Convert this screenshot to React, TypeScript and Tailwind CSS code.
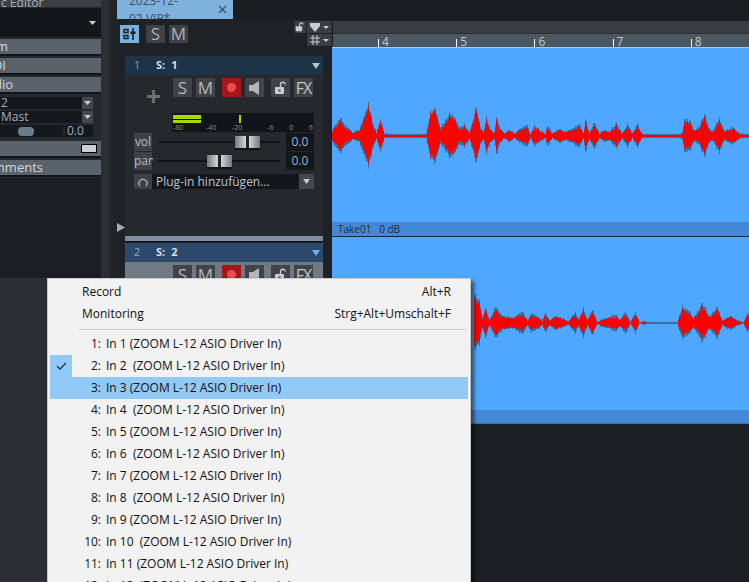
import type { ReactNode } from 'react'

// envelope points for the two visible clips: [x in px from lane start, peak in px]
const wave1: [number, number][] = [
  [0, 6], [2, 11], [8, 20], [13, 11], [17, 9], [20, 4], [27, 7], [36, 37], [40, 16], [44, 4], [48, 19], [52, 3], [57, 2], [90, 2], [94, 3], [98, 27],
  [103, 30], [108, 10], [112, 15], [117, 25], [122, 22], [127, 9], [132, 13], [137, 4], [140, 15], [144, 32], [148, 10], [151, 4], [154, 20], [158, 8], [162, 4], [164, 21],
  [168, 8], [172, 3], [177, 7], [182, 3], [188, 8], [195, 13], [198, 2], [202, 12], [207, 7], [213, 3], [215, 12], [220, 3], [227, 8], [233, 5], [240, 8], [247, 14],
  [251, 3], [253, 19], [257, 3], [262, 16], [267, 3], [272, 7], [277, 5], [284, 14], [290, 3], [295, 13], [300, 3], [305, 14], [309, 3], [313, 2], [347, 2], [350, 4],
  [352, 20], [358, 16], [362, 6], [367, 11], [372, 24], [377, 8], [380, 5], [387, 20], [392, 5], [400, 10], [407, 3], [416, 2], [417, 14], [419, 3],
]
const wave2: [number, number][] = [
  [142, 30], [147, 25], [150, 5], [153, 18], [157, 3], [163, 18], [170, 8], [175, 7], [181, 6], [190, 13], [195, 3], [199, 11], [205, 7], [210, 3], [213, 12], [217, 3],
  [223, 8], [231, 5], [236, 2], [243, 12], [246, 4], [251, 17], [255, 3], [260, 15], [265, 1], [270, 5], [277, 6], [282, 10], [288, 4], [293, 13], [298, 1], [303, 12],
  [307, 1], [312, 2], [320, 1], [330, 0.5], [336, 1], [345, 1], [350, 19], [357, 13], [361, 5], [370, 22], [377, 7], [385, 18], [390, 3], [398, 8], [405, 3], [411, 1], [415, 11], [419, 3],
]

function ampAt(env: [number, number][], x: number) {
  for (let i = 1; i < env.length; i++) {
    if (x <= env[i][0]) {
      const [x0, a0] = env[i - 1]
      const [x1, a1] = env[i]
      return a0 + ((a1 - a0) * (x - x0)) / (x1 - x0)
    }
  }
  return 0
}

function Wave({ env, center, height, baseline }: { env: [number, number][]; center: number; height: number; baseline: number }) {
  let outer = ''
  let inner = ''
  const start = env[0][0]
  const end = env[env.length - 1][0]
  for (let x = start; x <= end; x++) {
    const jitter = 0.82 + 0.18 * Math.abs(Math.sin(x * 12.9898) * 1.3 % 1)
    const a = Math.max(ampAt(env, x) * jitter, baseline)
    const low = a * 0.95
    outer += `M${x} ${(center - a).toFixed(0)}V${(center + low).toFixed(0)}`
    const ia = Math.max(a - (a > 8 ? 3 : 1), 0.5)
    inner += `M${x} ${(center - ia).toFixed(0)}V${(center + ia * 0.9).toFixed(0)}`
  }
  return (
    <svg width="417" height={height} className="block" shapeRendering="crispEdges">
      <g transform="translate(0.5 0)">
        <path d={outer} stroke="#3b6f9d" strokeWidth="1" fill="none" />
        <path d={inner} stroke="#ff0000" strokeWidth="1" fill="none" />
      </g>
    </svg>
  )
}

function Btn({ children, className = 'bg-[#404448] text-[#b4b7ba]' }: { children: ReactNode; className?: string }) {
  return <div className={`w-[19px] h-[19px] flex items-center justify-center text-[17px] leading-none ${className}`}>{children}</div>
}

function LockIcon({ color = '#c9ccd0' }: { color?: string }) {
  return (
    <svg width="14" height="14" viewBox="0 0 14 14">
      <path d="M6.5 6V3.6a2.4 2.4 0 0 1 4.8 0" stroke={color} strokeWidth="1.4" fill="none" />
      <rect x="1" y="6" width="9" height="7" rx="1" fill={color} />
      <rect x="4.5" y="8.5" width="2" height="2" fill="#404448" />
    </svg>
  )
}

function Fader({ label, pos, pan }: { label: string; pos: string; pan?: boolean }) {
  return (
    <div className="h-[18px] flex gap-px">
      <div className="w-[18px] bg-[#3e4246] text-[#b9bcc0] text-[12px] leading-[18px] text-center">{label}</div>
      <div className="relative w-[132px] bg-[#25282c]">
        <div className="absolute left-[5px] right-[5px] top-[8px] h-[2px] bg-[#111316]" />
        <div className={`absolute top-[3px] h-[12px] flex shadow-[0_2px_1px_#111316] ${pos} ${pan ? 'w-[25px]' : 'w-[25px]'}`}>
          <div className="flex-1 bg-gradient-to-r from-[#77797c] to-[#d5d7d9]" />
          <div className="w-[3px] bg-[#222]" />
          <div className="flex-1 bg-gradient-to-r from-[#d5d7d9] to-[#77797c]" />
        </div>
      </div>
      <div className="flex-1 bg-[#14171a] text-[#9ab3d2] text-[12px] leading-[18px] text-center">0.0</div>
    </div>
  )
}

function Track({ n, selected }: { n: number; selected?: boolean }) {
  return (
    <div className="flex flex-col shrink-0">
      <div className={`h-[19px] flex items-center text-[11px] font-bold text-[#d8dde2] ${selected ? 'bg-[#2b4a6b]' : 'bg-[#1d3347]'}`}>
        <span className="w-[10px] ml-[9px] font-normal text-[#8fa8b5]">{n}</span>
        <span className="ml-[12px]">S:</span>
        <span className="ml-[6px]">{n}</span>
        <svg className="ml-auto mr-[3px]" width="8" height="6" viewBox="0 0 8 6">
          <path d="M0 0h8L4 6z" fill={selected ? '#6fb2ec' : '#b9c4ce'} />
        </svg>
      </div>
      <div className={`h-[162px] pt-[3px] pl-[9px] pr-[9px] flex flex-col ${selected ? 'bg-[#6f7a85]' : 'bg-[#25282c]'}`}>
        <div className="flex">
          <div className="w-[39px] flex justify-center items-end pl-[0px] pb-0 h-[31px]">
            <span className="text-[#6f7377] text-[26px] leading-[26px] font-bold">+</span>
          </div>
          <div className="flex gap-[4px]">
            <Btn>S</Btn>
            <Btn>M</Btn>
            <Btn className="bg-[#a3181c] ml-[3px]">
              <span className="w-[9px] h-[9px] rounded-full bg-[#f0494e]" />
            </Btn>
            <Btn>
              <svg width="12" height="14" viewBox="0 0 12 14">
                <path d="M0 4h4l6-4v14l-6-4H0z" fill="#b4b7ba" />
              </svg>
            </Btn>
            <Btn className="bg-[#404448] ml-[3px]">
              <LockIcon />
            </Btn>
            <Btn className="bg-[#404448] text-[#c4c7ca] !text-[16px] tracking-[-1px]">FX</Btn>
          </div>
        </div>
        <div className="ml-[38px] w-[142px] h-[19px] mt-[4px] -mb-0 bg-[#111418] flex flex-col shrink-0 relative">
          <div className="absolute left-[1px] top-[2px] w-[28px] h-[4px] bg-[#a3d900]" />
          <div className="absolute left-[1px] top-[7px] w-[28px] h-[3px] bg-[#a3d900]" />
          <div className="absolute left-[67px] top-[2px] w-[2px] h-[8px] bg-[#a3d900]" />
          <div className="mt-auto flex justify-between text-[7px] leading-[9px] text-[#8b9095] px-[1px]">
            <span>-80</span>
            <span className="ml-[7px]">-40</span>
            <span>-20</span>
            <span className="ml-[9px]">-6</span>
            <span>0</span>
            <span>6</span>
          </div>
        </div>
        <div className="flex flex-col gap-px mt-[1px]">
          <Fader label="vol" pos="left-[82px]" />
          <Fader label="pan" pos="left-[54px]" pan />
        </div>
        <div className="h-[15px] mt-[4px] flex">
          <div className="w-[18px] bg-[#3e4246] flex items-center justify-center">
            <svg width="10" height="10" viewBox="0 0 10 10">
              <path d="M2 9a4 4 0 1 1 6 0" stroke="#b4b7ba" strokeWidth="1.2" fill="none" />
            </svg>
          </div>
          <div className="flex-1 bg-[#14171a] text-[#b8c6d6] text-[12px] leading-[15px] pl-[4px]">Plug-in hinzufügen...</div>
          <div className="w-[15px] bg-[#44484d] flex items-center justify-center">
            <svg width="7" height="5" viewBox="0 0 7 5">
              <path d="M0 0h7L3.5 5z" fill="#c9ccd0" />
            </svg>
          </div>
        </div>
        <div />
      </div>
    </div>
  )
}

function Section({ label, width, children }: { label: string; width: string; children?: ReactNode }) {
  return (
    <div className="h-[15px] bg-[#5a626c] flex items-center justify-between shrink-0 shadow-[0_2px_0_#111316]">
      <div className={`${width} overflow-hidden flex justify-end whitespace-nowrap text-[13px] leading-[15px] font-medium text-[#d5d8dc]`}>{label}</div>
      {children}
    </div>
  )
}

function Combo({ label }: { label: string }) {
  return (
    <div className="h-[12px] w-[93px] bg-[#14171b] flex justify-between text-[12px] leading-[12px] text-[#a9adb3]">
      <span className="pl-[1px]">{label}</span>
      <span className="w-[11px] bg-[#44484d] flex items-center justify-center">
        <svg width="7" height="4" viewBox="0 0 7 4">
          <path d="M0 0h7L3.5 4z" fill="#c9ccd0" />
        </svg>
      </span>
    </div>
  )
}

const inputs = [
  ['1:', 'In 1 (ZOOM L-12 ASIO Driver In)'],
  ['2:', 'In 2  (ZOOM L-12 ASIO Driver In)'],
  ['3:', 'In 3 (ZOOM L-12 ASIO Driver In)'],
  ['4:', 'In 4  (ZOOM L-12 ASIO Driver In)'],
  ['5:', 'In 5 (ZOOM L-12 ASIO Driver In)'],
  ['6:', 'In 6  (ZOOM L-12 ASIO Driver In)'],
  ['7:', 'In 7 (ZOOM L-12 ASIO Driver In)'],
  ['8:', 'In 8  (ZOOM L-12 ASIO Driver In)'],
  ['9:', 'In 9 (ZOOM L-12 ASIO Driver In)'],
  ['10:', 'In 10  (ZOOM L-12 ASIO Driver In)'],
  ['11:', 'In 11 (ZOOM L-12 ASIO Driver In)'],
  ['12:', 'In 12  (ZOOM L-12 ASIO Driver In)'],
]

export default function App() {
  return (
    <div className="relative w-[749px] h-[582px] overflow-hidden flex bg-[#2b2e33] font-['Open_Sans','Noto_Sans',sans-serif]">
      {/* left inspector */}
      <div className="w-[101px] h-[278px] shrink-0 flex flex-col bg-[#25282c]">
        <div className="h-[7px] bg-[#3b4047] overflow-hidden text-[12px] leading-[5px] text-[#a9adb3] whitespace-nowrap pl-[1px]">c Editor</div>
        <div className="h-[29px] mt-px bg-[#14171a] flex items-center justify-end pr-[5px]">
          <svg width="7" height="4" viewBox="0 0 7 4">
            <path d="M0 0h7L3.5 4z" fill="#c9ccd0" />
          </svg>
        </div>
        <div className="flex flex-col gap-[4px] mt-[2px]">
          <Section label="m" width="w-[8px]" />
          <Section label="DI" width="w-[6px]" />
          <Section label="Audio" width="w-[13px]" />
        </div>
        <div className="flex flex-col gap-[2px] mt-[5px]">
          <Combo label="2" />
          <Combo label="Mast" />
          <div className="h-[12px] w-[93px] flex gap-[2px]">
            <div className="w-[63px] bg-[#14171b] flex items-center pl-[18px]">
              <div className="w-[16px] h-[9px] rounded-[4px] bg-[#6d7a8c]" />
            </div>
            <div className="flex-1 bg-[#14171b] text-[#8fb0d6] text-[12px] leading-[12px] pl-[2px]">0.0</div>
          </div>
        </div>
        <div className="flex flex-col gap-[4px] mt-[4px]">
          <Section label="" width="w-[8px]">
            <div className="w-[16px] h-[9px] mr-[4px] bg-[#cfcfcf] border border-black" />
          </Section>
          <Section label="Comments" width="w-[43px]" />
        </div>
        <div className="flex-1 mt-[3px] bg-[#1b1e22]" />
      </div>
      <div className="w-[9px] shrink-0" />
      <div className="w-[7px] h-[278px] shrink-0 bg-[#202327]" />

      {/* arrangement */}
      <div className="flex-1 flex flex-col bg-[#1b1e22]">
        <div className="h-[20px] flex bg-[#1b1e21] shrink-0">
          <div className="w-[116px] h-[19px] bg-[#7fb1dd] flex items-center text-[12px] text-[#3d4a5c]">
            <span className="ml-[12px]">2023-12-02.VIP*</span>
            <span className="ml-auto mr-[6px]">
              <svg width="9" height="9" viewBox="0 0 9 9">
                <path d="M1 1l7 7M8 1l-7 7" stroke="#3d4a5c" strokeWidth="1.1" />
              </svg>
            </span>
          </div>
        </div>
        <div className="h-[28px] flex shrink-0">
          <div className="w-[215px] bg-[#1e2125] flex relative">
            <div className="mt-[5px] ml-[3px] w-[19px] h-[18px] bg-[#78b1e0] flex items-center justify-center">
              <svg width="13" height="12" viewBox="0 0 13 12">
                <path d="M1 1.5h4v3H1zM1 7.5h4v3H1z" fill="none" stroke="#1b1e22" strokeWidth="1.4" />
                <path d="M10 0v12" stroke="#1b1e22" strokeWidth="1.6" />
                <rect x="7.5" y="3.5" width="5" height="2.5" fill="#1b1e22" />
              </svg>
            </div>
            <div className="mt-[5px] ml-[7px] w-[19px] h-[18px] bg-[#3e4246] text-[#adb0b3] text-[17px] leading-[18px] text-center">S</div>
            <div className="mt-[5px] ml-[4px] w-[19px] h-[18px] bg-[#3e4246] text-[#adb0b3] text-[17px] leading-[18px] text-center">M</div>
            <div className="ml-auto flex flex-col gap-px mt-px w-[38px]">
              <div className="flex h-[12px] gap-px">
                <div className="w-[12px] bg-[#3a3e42] flex items-center justify-center">
                  <svg width="10" height="10" viewBox="0 0 14 14">
                    <path d="M6.5 6V3.6a2.4 2.4 0 0 1 4.8 0" stroke="#c9ccd0" strokeWidth="1.6" fill="none" />
                    <rect x="1" y="6" width="9" height="7" rx="1" fill="#c9ccd0" />
                  </svg>
                </div>
                <div className="flex-1 bg-[#3a3e42] flex items-center justify-center gap-[3px]">
                  <svg width="10" height="9" viewBox="0 0 10 9">
                    <path d="M0 0h10v3L5 9 0 3z" fill="#c9ccd0" />
                  </svg>
                  <svg width="6" height="3" viewBox="0 0 6 3">
                    <path d="M0 0h6L3 3z" fill="#c9ccd0" />
                  </svg>
                </div>
              </div>
              <div className="flex h-[12px] ml-[13px] bg-[#3a3e42] items-center justify-center gap-[3px]">
                <svg width="10" height="10" viewBox="0 0 10 10">
                  <path d="M3 0v10M7 0v10M0 3h10M0 7h10" stroke="#c9ccd0" strokeWidth="1" />
                </svg>
                <svg width="6" height="3" viewBox="0 0 6 3">
                  <path d="M0 0h6L3 3z" fill="#c9ccd0" />
                </svg>
              </div>
            </div>
          </div>
          {/* ruler */}
          <div className="flex-1 flex flex-col border-l border-[#14171a] pt-px">
            <div className="h-[12px] bg-[#383d45]" />
            <div className="h-[14px] bg-[#4d5761] flex items-end pl-[45px] text-[12px] leading-[14px] text-[#c3c9d0] border-t border-[#2b2f34]">
              {['4', '5', '6', '7', '8'].map((t) => (
                <div key={t} className="w-[78.2px] flex shrink-0 items-end">
                  <span className="w-px h-[8px] bg-white" />
                  <span className="ml-[3px] -mb-px h-[13px] leading-[13px]">{t}</span>
                </div>
              ))}
            </div>
          </div>
        </div>
        <div className="flex">
          <div className="relative w-[215px] h-[375px] shrink-0 bg-[#1e2125] pt-[8px] pl-[8px] pr-[9px] overflow-hidden flex flex-col">
            <Track n={1} />
            <div className="h-[6px] mt-[-1px] shrink-0 bg-[#7f8d9e] border-b border-[#111316]" />
            <div className="h-[1px] shrink-0" />
            <Track n={2} selected />
            <svg className="absolute left-0 top-[175px]" width="8" height="9" viewBox="0 0 8 9">
              <path d="M0 0l8 4.5L0 9z" fill="#a7adb5" />
            </svg>
          </div>
          <div className="w-[417px] flex flex-col">
            <div className="h-px bg-[#8fd0ff] shrink-0 -mt-px" />
            <div className="h-[174px] bg-[#4fa7ff] shrink-0">
              <Wave env={wave1} center={88} height={174} baseline={2.5} />
            </div>
            <div className="h-[14px] bg-[#4489d6] shrink-0 text-[10px] leading-[14px] text-[#1c2a3c] pl-[6px]">Take01&nbsp;&nbsp;&nbsp;0 dB</div>
            <div className="h-px bg-[#20262d] shrink-0" />
            <div className="h-[173px] bg-[#4fa7ff] shrink-0">
              <Wave env={wave2} center={86} height={173} baseline={0.6} />
            </div>
            <div className="h-[13px] bg-[#4489d6] shrink-0" />
            <div className="h-px bg-[#3a6fa8] shrink-0" />
          </div>
        </div>
      </div>

      {/* context menu over everything */}
      <div className="absolute left-[47px] top-[278px] w-[424px] h-[320px] bg-[#f2f2f2] border border-[#c9c9c9] shadow-[3px_3px_4px_rgba(0,0,0,0.55)] text-[12px] text-[#111] pt-[2px] px-[2px]">
        <div className="h-[22px] flex items-center justify-between pl-[32px] pr-[17px]">
          <span>Record</span>
          <span>Alt+R</span>
        </div>
        <div className="h-[22px] flex items-center justify-between pl-[32px] pr-[17px]">
          <span>Monitoring</span>
          <span>Strg+Alt+Umschalt+F</span>
        </div>
        <div className="h-px ml-[29px] mr-[1px] mt-[4px] mb-[2px] bg-[#cfcfcf]" />
        <div className="h-[1px]" />
        {inputs.map(([num, name], i) => (
          <div key={num} className={`h-[22px] flex items-center ${i === 2 ? 'bg-[#91c9f7]' : ''}`}>
            <div className={`w-[22px] h-[22px] flex items-center justify-center shrink-0 ${i === 1 ? 'bg-[#91c9f7]' : ''}`}>
              {i === 1 && (
                <svg width="11" height="8" viewBox="0 0 11 8">
                  <path d="M1 4l3 3 6-6" stroke="#2b2f33" strokeWidth="1.3" fill="none" />
                </svg>
              )}
            </div>
            <span className="w-[29px] text-right shrink-0 whitespace-pre">{num}</span>
            <span className={`${i > 8 ? 'ml-[5px]' : 'ml-[5px]'} whitespace-pre`}>{name}</span>
          </div>
        ))}
      </div>
    </div>
  )
}
